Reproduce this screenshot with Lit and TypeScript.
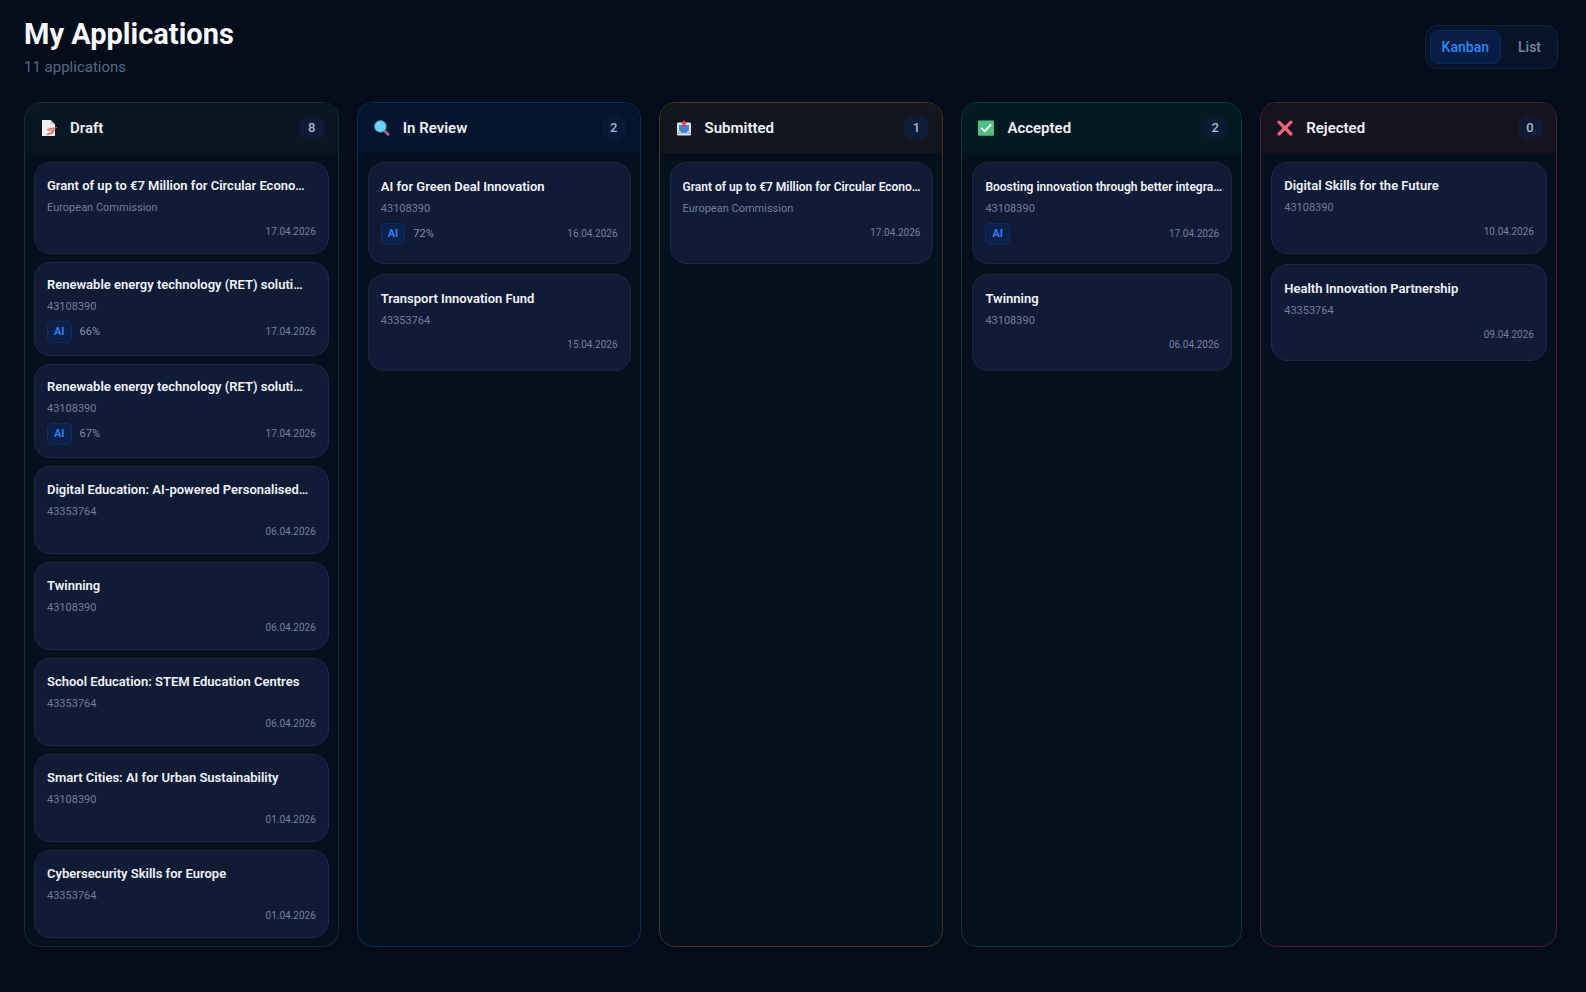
import { LitElement, html, css, svg, nothing } from "lit";
import { customElement, property, state } from "lit/decorators.js";
import { classMap } from "lit/directives/class-map.js";

type Size = "compact" | "scored" | "standard" | "medium" | "tall";

interface Application {
  title: string;
  source: string;
  date: string;
  size: Size;
  ai?: boolean;
  score?: string;
  small?: boolean;
}

interface Stage {
  id: string;
  name: string;
  count: number;
  items: Application[];
}

const STAGES: Stage[] = [
  {
    id: "draft",
    name: "Draft",
    count: 8,
    items: [
      { title: "Grant of up to €7 Million for Circular Econo…", source: "European Commission", date: "17.04.2026", size: "standard" },
      { title: "Renewable energy technology (RET) soluti…", source: "43108390", date: "17.04.2026", size: "scored", ai: true, score: "66%" },
      { title: "Renewable energy technology (RET) soluti…", source: "43108390", date: "17.04.2026", size: "scored", ai: true, score: "67%" },
      { title: "Digital Education: AI-powered Personalised…", source: "43353764", date: "06.04.2026", size: "compact" },
      { title: "Twinning", source: "43108390", date: "06.04.2026", size: "compact" },
      { title: "School Education: STEM Education Centres", source: "43353764", date: "06.04.2026", size: "compact" },
      { title: "Smart Cities: AI for Urban Sustainability", source: "43108390", date: "01.04.2026", size: "compact" },
      { title: "Cybersecurity Skills for Europe", source: "43353764", date: "01.04.2026", size: "compact" },
    ],
  },
  {
    id: "review",
    name: "In Review",
    count: 2,
    items: [
      { title: "AI for Green Deal Innovation", source: "43108390", date: "16.04.2026", size: "tall", ai: true, score: "72%" },
      { title: "Transport Innovation Fund", source: "43353764", date: "15.04.2026", size: "medium" },
    ],
  },
  {
    id: "submitted",
    name: "Submitted",
    count: 1,
    items: [
      { title: "Grant of up to €7 Million for Circular Econo…", source: "European Commission", date: "17.04.2026", size: "tall", small: true },
    ],
  },
  {
    id: "accepted",
    name: "Accepted",
    count: 2,
    items: [
      { title: "Boosting innovation through better integra…", source: "43108390", date: "17.04.2026", size: "tall", ai: true, small: true },
      { title: "Twinning", source: "43108390", date: "06.04.2026", size: "medium" },
    ],
  },
  {
    id: "rejected",
    name: "Rejected",
    count: 0,
    items: [
      { title: "Digital Skills for the Future", source: "43108390", date: "10.04.2026", size: "standard" },
      { title: "Health Innovation Partnership", source: "43353764", date: "09.04.2026", size: "medium" },
    ],
  },
];

const ICONS: Record<string, unknown> = {
  draft: svg`
    <path d="M1 0h8.6L14 4.4V16H1z" fill="#eef0f6"/>
    <path d="M9.6 0 14 4.4H9.6z" fill="#c3c9d8"/>
    <path d="M15.4 7.6 9.6 8.6 6.4 9.8 9.8 10.4 13 9.4M13.6 10 10 12.4 5.8 14.4 10.4 13.8 12.4 11.8" fill="none" stroke="#e8695a" stroke-width="1.1" stroke-linejoin="round" stroke-linecap="round"/>`,
  review: svg`
    <path d="M10.6 10.8 14 14.2" stroke="#a45a9e" stroke-width="3" stroke-linecap="round"/>
    <circle cx="6.4" cy="6.4" r="5.8" fill="#67d3f7" stroke="#4f9cc4" stroke-width="0.8"/>
    <path d="M3 6.2a3.4 3.4 0 0 1 2.8-2.8" fill="none" stroke="#8fe0fb" stroke-width="1.2" stroke-linecap="round"/>`,
  submitted: svg`
    <rect x="1" y="2.6" width="14" height="13" rx="1.4" fill="#d9e3f5"/>
    <path d="M3 5h10v5.2L10.2 13H5.8L3 10.2z" fill="#3f86d4"/>
    <path d="M3 11.4h1.4L6 13.6h4l1.6-2.2H13v2.8H3z" fill="#b9c9e6"/>
    <path d="M6.4 7V3.8H5.4L8 0l2.6 3.8h-1V7z" fill="#e2405a"/>
    <path d="M2.4 12.4v1.4M13.6 12.4v1.4" stroke="#e2405a" stroke-width="1"/>`,
  accepted: svg`
    <rect x="0" y="0.4" width="16" height="15.4" rx="1.2" fill="#52c17f"/>
    <path d="M3.6 8.4 6.8 11.4 12.6 4.8" fill="none" stroke="#f1fbf5" stroke-width="1.9" stroke-linecap="round" stroke-linejoin="round"/>`,
  rejected: svg`
    <path d="M2 2.2 14 14M14 2.2 2 14" fill="none" stroke="#f0627a" stroke-width="3.2" stroke-linecap="round"/>`,
};

@customElement("application-card")
export class ApplicationCard extends LitElement {
  @property({ attribute: false }) item!: Application;

  static styles = css`
    :host {
      display: block;
    }
    .card {
      box-sizing: border-box;
      padding: 13px 12px 11px;
      border: 1px solid #1c2944;
      border-radius: 16px;
      background: #101b36;
    }
    .compact { min-height: 88px; }
    .standard { min-height: 91px; }
    .scored { min-height: 94px; padding-top: 12px; }
    .medium { min-height: 97px; padding-top: 14px; }
    .tall { min-height: 102px; padding-top: 14px; }
    .title {
      margin: 0 -10px 0 0;
      overflow: hidden;
      color: #f0f3fa;
      font-size: 13px;
      font-weight: 600;
      line-height: 20px;
      text-overflow: ellipsis;
      white-space: nowrap;
    }
    .small {
      font-size: 12px;
    }
    .source {
      margin: 4px 0 0;
      color: #6e7f9d;
      font-size: 11px;
      line-height: 16px;
    }
    .meta {
      display: flex;
      align-items: center;
      gap: 8px;
      min-height: 20px;
      margin-top: 6px;
    }
    .compact .meta {
      min-height: 16px;
      margin-top: 4px;
    }
    .ai {
      padding: 0 6px;
      border: 1px solid #0f2d60;
      border-radius: 5px;
      background: #0b204a;
      color: #2f86f6;
      font-size: 11px;
      font-weight: 600;
      line-height: 20px;
    }
    .score {
      color: #8391ae;
      font-size: 11px;
      line-height: 16px;
    }
    .date {
      margin-left: auto;
      color: #7282a0;
      font-size: 10px;
      line-height: 16px;
    }
  `;

  render() {
    const { title, source, date, size, ai, score, small } = this.item;
    return html`
      <article class="card ${size}">
        <h3 class=${classMap({ title: true, small: !!small })}>${title}</h3>
        <p class="source">${source}</p>
        <div class="meta">
          ${ai ? html`<span class="ai">AI</span>` : nothing}
          ${score ? html`<span class="score">${score}</span>` : nothing}
          <time class="date">${date}</time>
        </div>
      </article>
    `;
  }
}

@customElement("stage-column")
export class StageColumn extends LitElement {
  @property({ attribute: false }) stage!: Stage;

  static styles = css`
    :host {
      display: block;
      min-width: 0;
    }
    .column {
      box-sizing: border-box;
      height: 100%;
      overflow: hidden;
      border: 1px solid var(--edge);
      border-radius: 16px;
      background: #04101e;
    }
    .draft { --edge: #1a2b38; --tint: #0a1622; --chip: #0e1b36; }
    .review { --edge: #0f2b57; --tint: #04142c; --chip: #081a38; }
    .submitted { --edge: #4a341d; --tint: #13171d; --chip: #0e1d3a; }
    .accepted { --edge: #0d3a3d; --tint: #041a22; --chip: #091b35; }
    .rejected { --edge: #4d1e2e; --tint: #17121f; --chip: #0f1c33; }
    .head {
      display: flex;
      align-items: center;
      gap: 13px;
      height: 50px;
      padding: 0 13px 0 16px;
      background: var(--tint);
    }
    .icon {
      flex: none;
      width: 16px;
      height: 16px;
    }
    .name {
      margin: 0;
      color: #eef2fa;
      font-size: 15px;
      font-weight: 600;
      line-height: 20px;
    }
    .count {
      min-width: 26px;
      margin-left: auto;
      border-radius: 12px;
      background: var(--chip);
      color: #a9b8d3;
      font-size: 13px;
      font-weight: 500;
      line-height: 24px;
      text-align: center;
    }
    .list {
      display: flex;
      flex-direction: column;
      gap: 10px;
      padding: 9px 9px 8px 10px;
    }
    .draft .list {
      gap: 8px;
      padding-left: 9px;
    }
  `;

  render() {
    const { id, name, count, items } = this.stage;
    return html`
      <section class="column ${id}" aria-labelledby="name">
        <header class="head">
          <svg class="icon" viewBox="0 0 16 16" aria-hidden="true">${ICONS[id]}</svg>
          <h2 class="name" id="name">${name}</h2>
          <span class="count">${count}</span>
        </header>
        <div class="list">
          ${items.map((item) => html`<application-card .item=${item}></application-card>`)}
        </div>
      </section>
    `;
  }
}

@customElement("app-root")
export class AppRoot extends LitElement {
  @state() private view = "Kanban";

  static styles = css`
    :host {
      display: block;
      box-sizing: border-box;
      min-height: 100vh;
      padding: 16px 28px 46px 24px;
      background: #020c1b;
      font-family: Roboto, "Liberation Sans", sans-serif;
    }
    .top {
      display: flex;
      align-items: center;
      justify-content: space-between;
      margin-bottom: 24px;
    }
    .heading {
      margin: 0;
      color: #f7f9fd;
      font-size: 29px;
      font-weight: 700;
      line-height: 36px;
    }
    .total {
      margin: 4px 0 0;
      color: #576983;
      font-size: 15px;
      line-height: 22px;
    }
    .toggle {
      display: flex;
      gap: 5px;
      padding: 4px;
      border: 1px solid #13233d;
      border-radius: 12px;
      background: #061429;
    }
    .option {
      padding: 0 11px;
      border: 1px solid transparent;
      border-radius: 8px;
      background: transparent;
      color: #7485a1;
      font: 500 14px/32px Roboto, "Liberation Sans", sans-serif;
      cursor: pointer;
    }
    .active {
      border-color: #0c285a;
      background: #081e46;
      color: #2f86f6;
    }
    .board {
      display: grid;
      grid-template-columns:
        minmax(0, 315fr) minmax(0, 284fr) minmax(0, 285fr)
        minmax(0, 281fr) minmax(0, 297fr);
      gap: 18px;
      margin-right: 1px;
    }
  `;

  render() {
    return html`
      <header class="top">
        <div>
          <h1 class="heading">My Applications</h1>
          <p class="total">11 applications</p>
        </div>
        <div class="toggle" role="group" aria-label="View">
          ${["Kanban", "List"].map(
            (name) => html`
              <button
                type="button"
                class=${classMap({ option: true, active: this.view === name })}
                aria-pressed=${this.view === name}
                @click=${() => (this.view = name)}
              >${name}</button>
            `,
          )}
        </div>
      </header>
      <main class="board">
        ${STAGES.map((stage) => html`<stage-column .stage=${stage}></stage-column>`)}
      </main>
    `;
  }
}
